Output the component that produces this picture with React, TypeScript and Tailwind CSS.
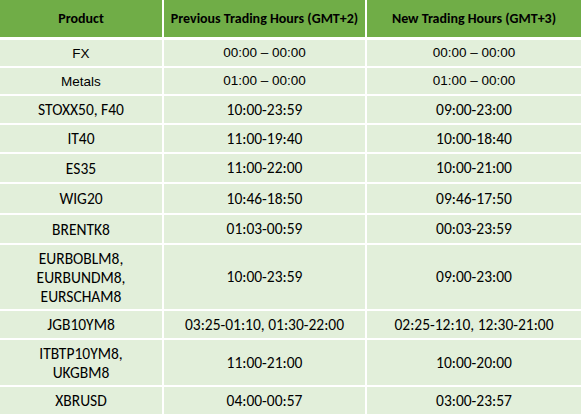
import React from 'react';

type Row = {
  product: string[];
  prev: string;
  next: string;
  h: string;
  arial?: boolean;
};

const rows: Row[] = [
  { product: ['FX'], prev: '00:00 – 00:00', next: '00:00 – 00:00', h: 'h-[26px]', arial: true },
  { product: ['Metals'], prev: '01:00 – 00:00', next: '01:00 – 00:00', h: 'h-[26px]', arial: true },
  { product: ['STOXX50, F40'], prev: '10:00-23:59', next: '09:00-23:00', h: 'h-[27px]' },
  { product: ['IT40'], prev: '11:00-19:40', next: '10:00-18:40', h: 'h-[27px]' },
  { product: ['ES35'], prev: '11:00-22:00', next: '10:00-21:00', h: 'h-[28px]' },
  { product: ['WIG20'], prev: '10:46-18:50', next: '09:46-17:50', h: 'h-[29px]' },
  { product: ['BRENTK8'], prev: '01:03-00:59', next: '00:03-23:59', h: 'h-[28px]' },
  { product: ['EURBOBLM8,', 'EURBUNDM8,', 'EURSCHAM8'], prev: '10:00-23:59', next: '09:00-23:00', h: 'h-[64px]' },
  { product: ['JGB10YM8'], prev: '03:25-01:10, 01:30-22:00', next: '02:25-12:10, 12:30-21:00', h: 'h-[27px]' },
  { product: ['ITBTP10YM8,', 'UKGBM8'], prev: '11:00-21:00', next: '10:00-20:00', h: 'h-[45px]' },
  { product: ['XBRUSD'], prev: '04:00-00:57', next: '03:00-23:57', h: 'h-[27px]' },
];

const cols = 'grid grid-cols-[162px_201px_214px] gap-x-[2px]';

const App: React.FC = () => {
  return (
    <div className="w-[583px] h-[414px] bg-white overflow-hidden">
      <div className={`${cols} h-[37px] mb-[3px]`}>
        {['Product', 'Previous Trading Hours (GMT+2)', 'New Trading Hours (GMT+3)'].map((t) => (
          <div
            key={t}
            className="bg-[#70ad47] flex items-center justify-center font-['Carlito','Lato',sans-serif] font-bold text-[14px] text-black"
          >
            {t}
          </div>
        ))}
      </div>
      <div className="flex flex-col gap-y-[2px]">
        {rows.map((r) => {
          const font = r.arial
            ? "font-['Liberation_Sans',Arial,sans-serif] text-[13.5px]"
            : "font-['Carlito','Lato',sans-serif] text-[15.5px]";
          return (
            <div key={r.product[0]} className={`${cols} ${r.h}`}>
              <div className={`bg-[#e2efda] flex flex-col items-center justify-center leading-[19px] text-black ${font}`}>
                {r.product.map((p) => (
                  <span key={p}>{p}</span>
                ))}
              </div>
              <div className={`bg-[#e2efda] flex items-center justify-center text-black ${font}`}>
                {r.prev}
              </div>
              <div className={`bg-[#e2efda] flex items-center justify-center text-black ${font}`}>
                {r.next}
              </div>
            </div>
          );
        })}
      </div>
    </div>
  );
};

export default App;
